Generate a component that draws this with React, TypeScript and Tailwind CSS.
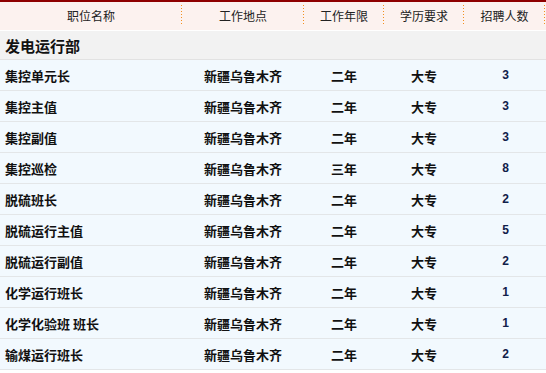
import React from 'react'

type Job = {
  name: string
  place: string
  years: string
  degree: string
  count: number
}

const jobs: Job[] = [
  { name: '集控单元长', place: '新疆乌鲁木齐', years: '二年', degree: '大专', count: 3 },
  { name: '集控主值', place: '新疆乌鲁木齐', years: '二年', degree: '大专', count: 3 },
  { name: '集控副值', place: '新疆乌鲁木齐', years: '二年', degree: '大专', count: 3 },
  { name: '集控巡检', place: '新疆乌鲁木齐', years: '三年', degree: '大专', count: 8 },
  { name: '脱硫班长', place: '新疆乌鲁木齐', years: '二年', degree: '大专', count: 2 },
  { name: '脱硫运行主值', place: '新疆乌鲁木齐', years: '二年', degree: '大专', count: 5 },
  { name: '脱硫运行副值', place: '新疆乌鲁木齐', years: '二年', degree: '大专', count: 2 },
  { name: '化学运行班长', place: '新疆乌鲁木齐', years: '二年', degree: '大专', count: 1 },
  { name: '化学化验班 班长', place: '新疆乌鲁木齐', years: '二年', degree: '大专', count: 1 },
  { name: '输煤运行班长', place: '新疆乌鲁木齐', years: '二年', degree: '大专', count: 2 },
]

const headers = ['职位名称', '工作地点', '工作年限', '学历要求', '招聘人数']

const cols = 'grid grid-cols-[182px_122px_80px_80px_81px_1fr]'

const cjk = "font-['Noto_Sans_CJK_SC','Noto_Sans',sans-serif]"

// dotted orange divider between header cells
const Separator = () => (
  <div className="w-px h-[20px] bg-[linear-gradient(to_bottom,#f39020_1px,transparent_1px)] bg-[length:1px_3px] bg-repeat-y" />
)

const HeaderRow = () => (
  <div className={`${cols} h-[29px] bg-[#fcf2ef] border-b border-white`}>
    {headers.map((h) => (
      <div key={h} className="relative flex items-center justify-center">
        <span className="text-[12px] leading-none text-[#222]">{h}</span>
        <div className="absolute right-0 top-[3px]">
          <Separator />
        </div>
      </div>
    ))}
    <div />
  </div>
)

const App = () => (
  <div className={`w-[546px] h-[373px] bg-white overflow-hidden ${cjk}`}>
    <div className="border-t-2 border-[#8e0000]">
      <HeaderRow />
      <div className="h-[29px] bg-[#f2f2f2] border-b border-[#e2e2e2] flex items-center pl-[5px]">
        <span className="text-[15px] font-bold leading-none text-[#111]">发电运行部</span>
      </div>
      {jobs.map((job) => (
        <div
          key={job.name}
          className={`${cols} h-[31px] bg-[#f2f9fe] border-b border-[#e3e6e8] text-[13px] font-bold text-[#111] leading-none`}
        >
          <div className="flex items-center pl-[5px]">{job.name}</div>
          <div className="flex items-center justify-center">{job.place}</div>
          <div className="flex items-center justify-center">{job.years}</div>
          <div className="flex items-center justify-center">{job.degree}</div>
          <div className="flex items-center justify-center pl-[2px] font-['Liberation_Sans',sans-serif] text-[12px] text-[#10204a]">
            {job.count}
          </div>
          <div />
        </div>
      ))}
    </div>
  </div>
)

export default App
